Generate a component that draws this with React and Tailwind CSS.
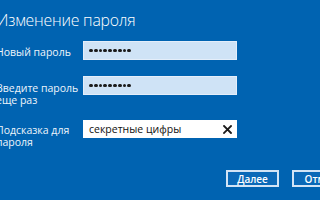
export default function App() {
  const dots = Array.from({ length: 9 });
  const Dots = () => (
    <div className="flex items-center gap-[1px]">
      {dots.map((_, i) => (
        <span key={i} className="block w-[3.8px] h-[3.8px] rounded-full bg-[#1b1b1b]" />
      ))}
    </div>
  );
  return (
    <div className="w-[320px] h-[200px] overflow-hidden bg-[#0063b1] text-white" style={{ fontFamily: '"Open Sans", "Noto Sans", sans-serif' }}>
      <div className="w-[380px] ml-[-4px] pt-[10px]">
        <div className="ml-[1px] text-[15.8px] leading-[21px] font-light tracking-[-0.2px] whitespace-nowrap">Изменение пароля</div>

        <div className="flex items-start mt-[10px]">
          <div className="w-[87px] pt-[5px] text-[10.5px] leading-[12px] text-[#eef4fb] whitespace-nowrap">Новый пароль</div>
          <div className="w-[154px] h-[19px] bg-[#cfe3f6] border border-[#e4eefa] flex items-center pl-[5px]">
            <Dots />
          </div>
        </div>

        <div className="flex items-start mt-[16px]">
          <div className="w-[87px] pt-[6px] text-[10.5px] leading-[12px] text-[#eef4fb] whitespace-nowrap">Введите пароль<br />еще раз</div>
          <div className="w-[154px] h-[19px] bg-[#cfe3f6] border border-[#e4eefa] flex items-center pl-[5px]">
            <Dots />
          </div>
        </div>

        <div className="flex items-start mt-[14px]">
          <div className="w-[87px] pt-[4px] text-[10.5px] leading-[12px] text-[#eef4fb] whitespace-nowrap">Подсказка для<br />пароля</div>
          <div className="w-[154px] h-[18px] bg-white flex items-center justify-between pl-[6px] pr-[5px]">
            <span className="text-[10.5px] leading-[12px] text-[#111] whitespace-nowrap">секретные цифры</span>
            <svg width="9" height="9" viewBox="0 0 9 9">
              <path d="M1 1 L8 8 M8 1 L1 8" stroke="#1a1a1a" strokeWidth="1.8" strokeLinecap="square" />
            </svg>
          </div>
        </div>

        <div className="flex justify-end gap-[13px] pr-[20px] mt-[22px]">
          <div className="w-[53px] h-[17px] border-2 border-[#d2e4f6] bg-[#0a69b8] flex items-center justify-center text-[10px] font-semibold leading-none">Далее</div>
          <div className="w-[64px] h-[17px] border-2 border-[#d2e4f6] bg-[#0a69b8] flex items-center justify-center text-[10px] font-semibold leading-none">Отмена</div>
        </div>
      </div>
    </div>
  );
}
